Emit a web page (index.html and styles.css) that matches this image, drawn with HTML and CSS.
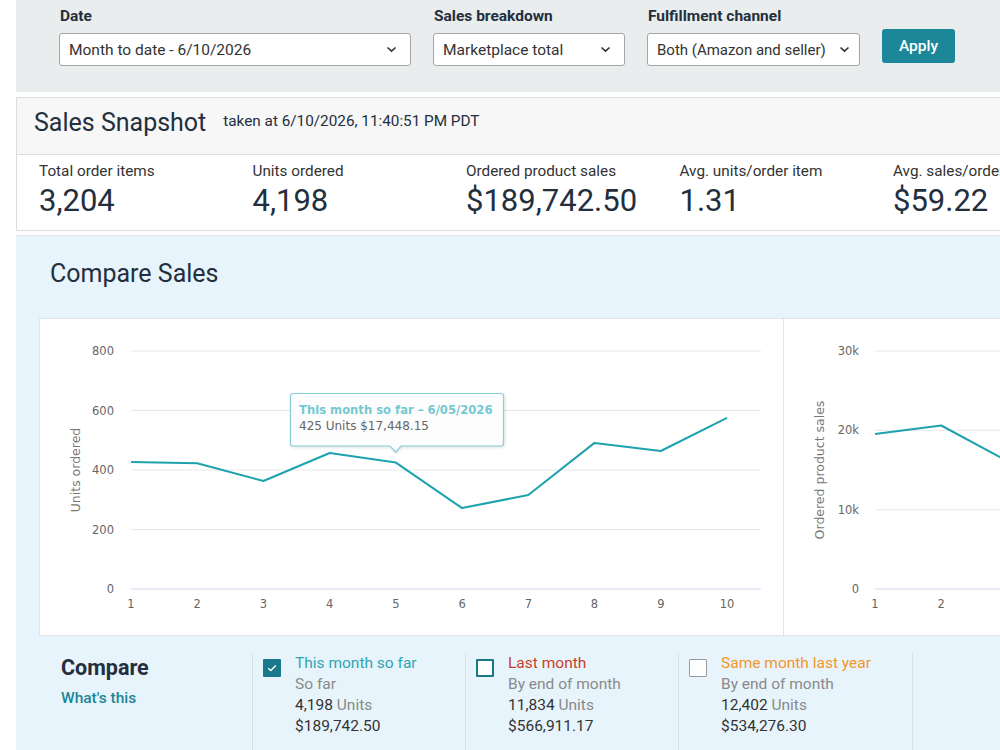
FILE: index.html
```html
<!DOCTYPE html>
<html lang="en">
<head>
<meta charset="utf-8">
<title>Sales Dashboard</title>
<link rel="stylesheet" href="styles.css">
</head>
<body>
<div class="page">
  <form class="filters">
    <div class="field field-date">
      <label class="field-label">Date</label>
      <div class="select"><span>Month to date - 6/10/2026</span><svg class="chev" width="11" height="7" viewBox="0 0 11 7"><path d="M1.5 1.5 L5.5 5.2 L9.5 1.5" fill="none" stroke="#333" stroke-width="1.6"/></svg></div>
    </div>
    <div class="field field-breakdown">
      <label class="field-label">Sales breakdown</label>
      <div class="select"><span>Marketplace total</span><svg class="chev" width="11" height="7" viewBox="0 0 11 7"><path d="M1.5 1.5 L5.5 5.2 L9.5 1.5" fill="none" stroke="#333" stroke-width="1.6"/></svg></div>
    </div>
    <div class="field field-channel">
      <label class="field-label">Fulfillment channel</label>
      <div class="select select-tight"><span>Both (Amazon and seller)</span><svg class="chev" width="11" height="7" viewBox="0 0 11 7"><path d="M1.5 1.5 L5.5 5.2 L9.5 1.5" fill="none" stroke="#333" stroke-width="1.6"/></svg></div>
    </div>
    <button type="button" class="apply">Apply</button>
  </form>

  <section class="snapshot">
    <header class="snapshot-head">
      <h1>Sales Snapshot</h1>
      <span class="taken">taken at 6/10/2026, 11:40:51 PM PDT</span>
    </header>
    <div class="metrics">
      <div class="metric"><div class="metric-label">Total order items</div><div class="metric-value">3,204</div></div>
      <div class="metric"><div class="metric-label">Units ordered</div><div class="metric-value">4,198</div></div>
      <div class="metric"><div class="metric-label">Ordered product sales</div><div class="metric-value">$189,742.50</div></div>
      <div class="metric"><div class="metric-label">Avg. units/order item</div><div class="metric-value">1.31</div></div>
      <div class="metric metric-last"><div class="metric-label">Avg. sales/order item</div><div class="metric-value">$59.22</div></div>
    </div>
  </section>

  <section class="compare-panel">
    <h2>Compare Sales</h2>
    <div class="charts">
      <div class="chart chart-units">
        <svg width="743" height="316" viewBox="0 0 743 316">
          <g class="grid">
            <line x1="91" y1="32" x2="721" y2="32"/>
            <line x1="91" y1="91.5" x2="721" y2="91.5"/>
            <line x1="91" y1="151" x2="721" y2="151"/>
            <line x1="91" y1="210.5" x2="721" y2="210.5"/>
          </g>
          <line class="axis" x1="91" y1="270" x2="721" y2="270"/>
          <g class="ylabels">
            <text x="74" y="36">800</text>
            <text x="74" y="95.5">600</text>
            <text x="74" y="155">400</text>
            <text x="74" y="214.5">200</text>
            <text x="74" y="274">0</text>
          </g>
          <text class="ytitle" transform="translate(40 151) rotate(-90)">Units ordered</text>
          <g class="xlabels">
            <text x="91" y="289">1</text>
            <text x="157.2" y="289">2</text>
            <text x="223.4" y="289">3</text>
            <text x="289.7" y="289">4</text>
            <text x="355.9" y="289">5</text>
            <text x="422.1" y="289">6</text>
            <text x="488.3" y="289">7</text>
            <text x="554.5" y="289">8</text>
            <text x="620.8" y="289">9</text>
            <text x="687" y="289">10</text>
          </g>
          <polyline class="series" points="91,143 157.2,144.2 223.4,162 289.7,134 355.9,143.6 422.1,189.1 488.3,176 554.5,123.9 620.8,132 687,98.9"/>
          <g class="tip">
            <path class="tip-box" d="M253 74.5 H461 a2.5 2.5 0 0 1 2.5 2.5 V124.5 a2.5 2.5 0 0 1 -2.5 2.5 H361 L355.5 133 L350 127 H253 a2.5 2.5 0 0 1 -2.5 -2.5 V77 a2.5 2.5 0 0 1 2.5 -2.5 Z"/>
            <text class="tip-title" x="259" y="95">This month so far – 6/05/2026</text>
            <text class="tip-body" x="259" y="110.5">425 Units $17,448.15</text>
          </g>
        </svg>
      </div>
      <div class="chart chart-sales">
        <svg width="260" height="316" viewBox="0 0 260 316">
          <g class="grid">
            <line x1="91" y1="32" x2="260" y2="32"/>
            <line x1="91" y1="111.3" x2="260" y2="111.3"/>
            <line x1="91" y1="190.7" x2="260" y2="190.7"/>
          </g>
          <line class="axis" x1="91" y1="270" x2="260" y2="270"/>
          <g class="ylabels">
            <text x="75" y="36">30k</text>
            <text x="75" y="115.3">20k</text>
            <text x="75" y="194.7">10k</text>
            <text x="75" y="274">0</text>
          </g>
          <text class="ytitle" transform="translate(40 151) rotate(-90)">Ordered product sales</text>
          <g class="xlabels">
            <text x="91" y="289">1</text>
            <text x="157.2" y="289">2</text>
          </g>
          <polyline class="series" points="91,115 157.2,106.5 223.4,142 289.7,118"/>
        </svg>
      </div>
    </div>

    <div class="compare-row">
      <div class="compare-intro">
        <h3>Compare</h3>
        <a class="whats-this" href="#">What's this</a>
      </div>
      <div class="period">
        <span class="box box-checked"><svg width="10" height="8" viewBox="0 0 10 8"><path d="M1.2 4.2 L3.8 6.6 L8.8 1.4" fill="none" stroke="#fff" stroke-width="1.4"/></svg></span>
        <div class="period-text">
          <div class="period-title title-this">This month so far</div>
          <div class="muted">So far</div>
          <div><span class="num">4,198</span> <span class="muted">Units</span></div>
          <div class="num">$189,742.50</div>
        </div>
      </div>
      <div class="period">
        <span class="box box-teal"></span>
        <div class="period-text">
          <div class="period-title title-last">Last month</div>
          <div class="muted">By end of month</div>
          <div><span class="num">11,834</span> <span class="muted">Units</span></div>
          <div class="num">$566,911.17</div>
        </div>
      </div>
      <div class="period period-wide">
        <span class="box box-plain"></span>
        <div class="period-text">
          <div class="period-title title-year">Same month last year</div>
          <div class="muted">By end of month</div>
          <div><span class="num">12,402</span> <span class="muted">Units</span></div>
          <div class="num">$534,276.30</div>
        </div>
      </div>
      <div class="period period-empty"></div>
    </div>
  </section>
</div>
</body>
</html>
```

FILE: styles.css
```css
html, body {
  margin: 0;
  padding: 0;
  background: #fff;
  overflow: hidden;
}

body {
  font-family: Roboto, "Liberation Sans", sans-serif;
  color: #232f3e;
}

.page {
  width: 1040px;
  padding-left: 16px;
}

/* ---- filter bar ---- */
.filters {
  display: flex;
  align-items: flex-start;
  height: 92px;
  box-sizing: border-box;
  padding: 7px 0 0 43px;
  background: #eaeded;
  margin: 0;
}

.field {
  display: flex;
  flex-direction: column;
  margin-right: 22px;
}

.field-date { width: 352px; }
.field-breakdown { width: 192px; }
.field-channel { width: 213px; }

.field-label {
  font-size: 15.5px;
  font-weight: 700;
  line-height: 18px;
  color: #232f3e;
  margin-bottom: 8px;
  padding-left: 1px;
}

.select {
  display: flex;
  align-items: center;
  justify-content: space-between;
  height: 33px;
  box-sizing: border-box;
  padding: 0 13px 0 9px;
  background: #fff;
  border: 1px solid #a6a6a6;
  border-radius: 3px;
  font-size: 15.5px;
  color: #333;
}

.select-tight {
  font-size: 15px;
  padding-right: 9px;
}

.chev { flex: none; }

.apply {
  margin-top: 22px;
  width: 73px;
  height: 34px;
  border: 0;
  border-radius: 3px;
  background: #1b8798;
  color: #fff;
  font-family: inherit;
  font-size: 15.5px;
  font-weight: 500;
}

/* ---- snapshot card ---- */
.snapshot {
  margin-top: 5px;
  border: 1px solid #dcdcdc;
  background: #fff;
}

.snapshot-head {
  display: flex;
  align-items: flex-start;
  height: 57px;
  box-sizing: border-box;
  padding: 9px 0 0 17px;
  background: #f7f7f7;
  border-bottom: 1px solid #dcdcdc;
}

.snapshot-head h1 {
  margin: 0;
  font-size: 25px;
  font-weight: 400;
  line-height: 32px;
  color: #232f3e;
}

.taken {
  margin: 5px 0 0 17px;
  font-size: 15.3px;
  color: #232f3e;
}

.metrics {
  display: flex;
  height: 75px;
  padding-left: 22px;
}

.metric {
  width: 213.5px;
  flex: none;
  padding-top: 7px;
}

.metric-last { white-space: nowrap; }

.metric-label {
  font-size: 15.3px;
  line-height: 18px;
  color: #333;
}

.metric-value {
  font-size: 31px;
  line-height: 36px;
  margin-top: 3px;
  color: #232f3e;
}

/* ---- compare sales ---- */
.compare-panel {
  margin-top: 4px;
  height: 520px;
  background: #e8f4fb;
  border-top: 1px solid #dde6ec;
  padding-left: 23px;
}

.compare-panel h2 {
  margin: 0;
  padding: 21px 0 0 11px;
  font-size: 25px;
  font-weight: 400;
  line-height: 34px;
  color: #232f3e;
}

.charts {
  display: flex;
  margin-top: 27px;
  height: 318px;
  box-sizing: border-box;
  background: #fff;
  border: 1px solid #dfe5e8;
}

.chart svg { display: block; }

.chart-units {
  border-right: 1px solid #dfe5e8;
}

.grid line {
  stroke: #e8e8e8;
  stroke-width: 1;
}

.axis {
  stroke: #ccd6eb;
  stroke-width: 1;
}

.ylabels text,
.xlabels text,
.ytitle {
  font-family: "DejaVu Sans", Verdana, sans-serif;
  font-size: 11.5px;
  fill: #666;
}

.ylabels text { text-anchor: end; }
.xlabels text { text-anchor: middle; }
.ytitle { text-anchor: middle; fill: #777; font-size: 12.5px; }

.series {
  fill: none;
  stroke: #1ea2ae;
  stroke-width: 2;
  stroke-linejoin: round;
}

.tip-box {
  fill: rgba(255, 255, 255, 0.92);
  stroke: #86d0d8;
  stroke-width: 1.2;
  filter: drop-shadow(1px 1px 1.5px rgba(0, 0, 0, 0.12));
}

.tip-title,
.tip-body {
  font-family: "DejaVu Sans", Verdana, sans-serif;
  font-size: 12px;
}

.tip-title { fill: #74c9d2; font-weight: 700; font-size: 11.6px; }
.tip-body { fill: #666; }

/* ---- compare row ---- */
.compare-row {
  display: flex;
  margin-top: 17px;
  height: 100px;
}

.compare-intro {
  width: 213px;
  flex: none;
  padding: 0 0 0 22px;
  box-sizing: border-box;
}

.compare-intro h3 {
  margin: 0;
  padding-top: 2px;
  font-size: 21.5px;
  font-weight: 700;
  line-height: 26px;
  color: #232f3e;
}

.whats-this {
  display: block;
  margin-top: 8px;
  font-size: 15.5px;
  font-weight: 500;
  color: #1c8696;
  text-decoration: none;
}

.period {
  display: flex;
  width: 213px;
  flex: none;
  box-sizing: border-box;
  border-left: 1px solid #d8e0e5;
  padding-left: 10px;
}

.period-wide { width: 234px; }
.period-empty { width: 100px; }

.box {
  flex: none;
  display: flex;
  align-items: center;
  justify-content: center;
  width: 18px;
  height: 18px;
  box-sizing: border-box;
  margin-top: 6px;
  margin-right: 14px;
  border-radius: 1px;
  background: #fff;
}

.box-checked {
  background: #19788a;
}

.box-teal {
  border: 2px solid #19788a;
}

.box-plain {
  border: 1px solid #9a9a9a;
}

.period-text {
  font-size: 15.5px;
  line-height: 21px;
}

.period-title { font-weight: 400; }
.title-this { color: #2fa6b3; }
.title-last { color: #c8402a; }
.title-year { color: #f2962c; }

.muted { color: #8a8a8a; }
.num { color: #333; }
```
